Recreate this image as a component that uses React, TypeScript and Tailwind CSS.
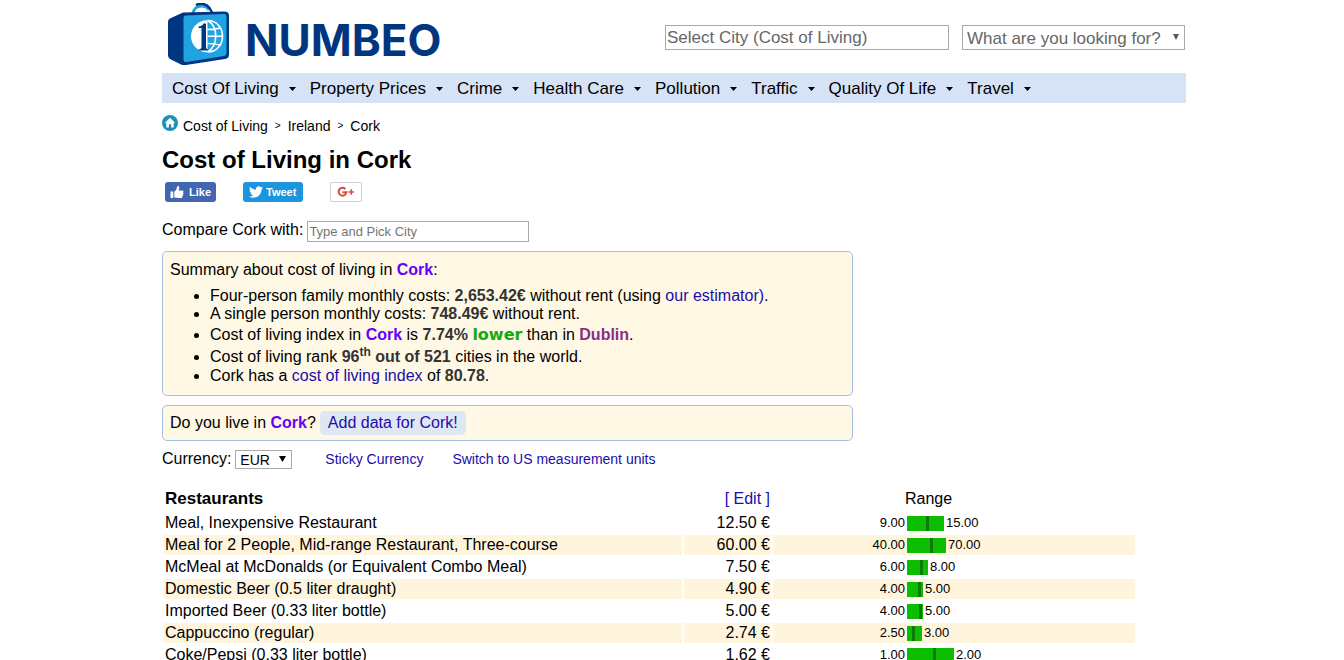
import type { ReactNode } from "react";

const menus = [
  "Cost Of Living",
  "Property Prices",
  "Crime",
  "Health Care",
  "Pollution",
  "Traffic",
  "Quality Of Life",
  "Travel",
];

type Price = {
  item: string;
  price: string;
  low: string;
  high: string;
  before: number;
  after: number;
};

const prices: Price[] = [
  { item: "Meal, Inexpensive Restaurant", price: "12.50", low: "9.00", high: "15.00", before: 19, after: 15 },
  { item: "Meal for 2 People, Mid-range Restaurant, Three-course", price: "60.00", low: "40.00", high: "70.00", before: 23, after: 13 },
  { item: "McMeal at McDonalds (or Equivalent Combo Meal)", price: "7.50", low: "6.00", high: "8.00", before: 13, after: 5 },
  { item: "Domestic Beer (0.5 liter draught)", price: "4.90", low: "4.00", high: "5.00", before: 11, after: 2 },
  { item: "Imported Beer (0.33 liter bottle)", price: "5.00", low: "4.00", high: "5.00", before: 12, after: 1 },
  { item: "Cappuccino (regular)", price: "2.74", low: "2.50", high: "3.00", before: 5, after: 7 },
  { item: "Coke/Pepsi (0.33 liter bottle)", price: "1.62", low: "1.00", high: "2.00", before: 26, after: 18 },
];

function Caret() {
  return (
    <svg className="h-1 w-[7px]" viewBox="0 0 7 4" aria-hidden="true">
      <path d="M0 0h7L3.500 4z" fill="#000" />
    </svg>
  );
}

function LogoMark() {
  return (
    <svg className="h-[62px] w-[62px] shrink-0" viewBox="0 0 62 62" aria-hidden="true">
      <path d="M25 10.500c.5-4.500 4-7.500 8.500-7.500 3.500 0 6 1.500 7.500 4" fill="none" stroke="#1fa1e0" strokeWidth="3" />
      <path d="M28 2.200C31 .2 38-.2 41.500 5l2.500 4.500" fill="none" stroke="#003580" strokeWidth="2.400" />
      <path d="M0 19Q0 16 3 15L15 9.500 56 8.500q5 0 5 4v39q0 4-4 4.500L18 62q-3 .5-5-.5l-10-5q-3-1.500-3-4z" fill="#003580" />
      <path d="M18 12.500 56 11q2.500 0 2.500 2.500V50q0 2.500-2.500 3l-37.500 6q-3 .4-3-2.500V15.500q0-2.800 2.500-3z" fill="#20a3e1" />
      <ellipse cx="39" cy="33.200" rx="16" ry="16" fill="#fff" />
      <path d="M39.500 17.200c20 0 20 32 0 32z" fill="#20a3e1" />
      <g fill="none" stroke="#fff" strokeWidth="1.600">
        <path d="M39.500 17.500c20 0 20 31.500 0 31.500M39.500 17.500c11 6 11 25 0 31.500M39.500 26.500q7 0 13-1.500M39.500 33.200h15M39.500 40.500q7 0 12.500 1.500" />
      </g>
      <path d="M30.500 23.500q4-.5 5-3h2.500V44q0 2 2 2.500v1h-9.500v-1q3-.3 3-2.500V25h-3z" fill="#003580" />
    </svg>
  );
}

function HomeIcon() {
  return (
    <svg className="h-4 w-4" viewBox="0 0 16 16" aria-hidden="true">
      <circle cx="8" cy="8" r="8" fill="#1793b8" />
      <path d="M8 2.800 2.800 8h1.500v4.600h2.600V9.200h2.200v3.400h2.600V8h1.500z" fill="#fff" />
    </svg>
  );
}

function ThumbIcon() {
  return (
    <svg className="h-3.5 w-3.5" viewBox="0 0 14 14" fill="#fff" aria-hidden="true">
      <path d="M.5 6.500h2.800V13H.5zM4.300 6.800C6 5.500 7 4 7 1.800 7 .5 9.200.6 9.200 2.800c0 1-.3 1.900-.7 2.700h3.700c1.500 0 1.700 1.800.7 2.200.9.5.7 1.800-.2 2 .6.600.3 1.600-.5 1.700.3.900-.3 1.600-1.300 1.600H7.500c-1.500 0-2.100-.5-3.200-.7z" />
    </svg>
  );
}

function BirdIcon() {
  return (
    <svg className="h-[14px] w-[14px]" viewBox="0 0 24 24" fill="#fff" aria-hidden="true">
      <path d="M23.950 4.570a10 10 0 0 1-2.820.77 4.960 4.960 0 0 0 2.160-2.720c-.95.550-2 .95-3.130 1.180a4.920 4.920 0 0 0-8.380 4.480C7.690 8.090 4.070 6.130 1.640 3.160a4.820 4.820 0 0 0-.67 2.480c0 1.710.87 3.210 2.190 4.100a4.900 4.900 0 0 1-2.230-.62v.06a4.920 4.920 0 0 0 3.950 4.830 5 5 0 0 1-2.210.08 4.940 4.940 0 0 0 4.600 3.420A9.870 9.870 0 0 1 0 19.540a14 14 0 0 0 7.550 2.210c9.050 0 14-7.500 14-13.980 0-.21 0-.42-.02-.63a9.940 9.940 0 0 0 2.460-2.550z" />
    </svg>
  );
}

function GPlusIcon() {
  return (
    <svg className="h-3 w-[18px]" viewBox="0 0 18 12" fill="none" stroke="#dc4a3d" strokeWidth="2" aria-hidden="true">
      <path d="M8.300 3A3.900 3.900 0 1 0 9.400 6.200H5.500" />
      <path d="M11.500 6H17M14.250 3.250v5.500" strokeWidth="1.600" />
    </svg>
  );
}

function A({ children }: { children: ReactNode }) {
  return (
    <a href="#" className="text-[#1a0dab]">
      {children}
    </a>
  );
}

function City({ children }: { children: ReactNode }) {
  return <strong className="text-[#6600ff]">{children}</strong>;
}

function Num({ children }: { children: ReactNode }) {
  return <strong className="text-[#333333]">{children}</strong>;
}

export default function App() {
  return (
    <div className="bg-white font-['Liberation_Sans',Arial,sans-serif] text-base leading-[18px] text-black">
      <div className="mx-auto max-w-[1028px] pl-1">
        <header className="flex h-[73px] items-start justify-between">
          <a href="#" className="flex items-start gap-[15px] pt-[3px] pl-1.5">
            <LogoMark />
            <span className="pt-[15px] font-['Inter',sans-serif] text-[44px] leading-[44px] font-bold text-[#003580]">
              NUMBEO
            </span>
          </a>
          <div className="flex gap-[13px] pt-[25px] pr-px">
            <input
              type="text"
              aria-label="Select City"
              placeholder="Select City (Cost of Living)"
              className="h-[25px] w-[284px] border border-[#a9a9a9] px-px text-[17px] placeholder:text-[#666666]"
            />
            <div className="relative">
              <select
                aria-label="What are you looking for?"
                className="h-[25px] w-[223px] appearance-none border border-[#a9a9a9] bg-white pt-0.5 pl-1 text-[17px] text-[#666666]"
              >
                <option>What are you looking for?</option>
              </select>
              <svg className="pointer-events-none absolute top-[9px] right-1.5 h-1.5 w-1.5" viewBox="0 0 6 6" aria-hidden="true">
                <path d="M0 0h6L3 6z" fill="#555" />
              </svg>
            </div>
          </div>
        </header>

        <nav className="flex h-[30px] items-center gap-[14px] bg-[#d6e3f7] pt-0.5 pl-2.5 text-[17px]">
          {menus.map((m) => (
            <button key={m} type="button" className="flex items-center gap-2.5">
              {m}
              <Caret />
            </button>
          ))}
        </nav>

        <nav aria-label="Breadcrumb" className="flex items-start gap-[5px] pt-3 text-sm leading-[18px]">
          <HomeIcon />
          <div className="flex items-center gap-[7px] pt-0.5">
            <a href="#">Cost of Living</a>
            <span className="text-[10px]">&gt;</span>
            <a href="#">Ireland</a>
            <span className="text-[10px]">&gt;</span>
            <a href="#">Cork</a>
          </div>
        </nav>

        <h1 className="pt-[11px] text-2xl leading-[28px] font-bold">Cost of Living in Cork</h1>

        <div className="flex gap-[27px] pt-2 pl-[3px] text-[11px] font-bold text-white">
          <button type="button" className="flex h-5 items-center gap-[5px] rounded-[3px] bg-[#4267b2] px-[5px]">
            <ThumbIcon />
            Like
          </button>
          <button type="button" className="flex h-5 items-center gap-[3px] rounded-[3px] bg-[#1b95e0] pr-[7px] pl-1.5">
            <BirdIcon />
            Tweet
          </button>
          <button type="button" aria-label="Share on Google Plus" className="flex h-5 w-8 items-center justify-center rounded-[2px] border border-[#d0d0d0]">
            <GPlusIcon />
          </button>
        </div>

        <div className="flex items-start gap-1 pt-[19px]">
          <label htmlFor="compare">Compare Cork with:</label>
          <input
            id="compare"
            type="text"
            placeholder="Type and Pick City"
            className="h-[21px] w-[222px] border border-[#a9a9a9] px-px text-[13px] placeholder:text-[#757575]"
          />
        </div>

        <section className="mt-[9px] h-[145px] max-w-[691px] rounded-[5px] border border-[#a3bfe6] bg-[#fff8e5] px-[7px] pt-[9px]">
          <p>
            Summary about cost of living in <City>Cork</City>:
          </p>
          <ul className="list-disc pt-2 pl-10">
            <li>
              Four-person family monthly costs: <Num>2,653.42€</Num> without rent (using <A>our estimator)</A>.
            </li>
            <li>
              A single person monthly costs: <Num>748.49€</Num> without rent.
            </li>
            <li className="leading-[24px]">
              Cost of living index in <City>Cork</City> is <Num>7.74%</Num>{" "}
              <strong className="font-['DejaVu_Sans',sans-serif] text-[#11aa11]">lower</strong> than in{" "}
              <strong className="text-[#882d88]">Dublin</strong>.
            </li>
            <li className="leading-[20px]">
              Cost of living rank{" "}
              <Num>
                96<sup>th</sup> out of 521
              </Num>{" "}
              cities in the world.
            </li>
            <li>
              Cork has a <A>cost of living index</A> of <Num>80.78</Num>.
            </li>
          </ul>
        </section>

        <section className="mt-[9px] flex h-9 max-w-[691px] items-center gap-1 rounded-[5px] border border-[#a3bfe6] bg-[#fff8e5] px-[7px]">
          <p>
            Do you live in <City>Cork</City>?
          </p>
          <a href="#" className="rounded-[5px] bg-[#dfe7f3] px-2 py-[3px] text-[#1a0dab]">
            Add data for Cork!
          </a>
        </section>

        <div className="flex items-start pt-[9px]">
          <label htmlFor="currency">Currency:</label>
          <div className="relative ml-1 flex">
            <select id="currency" className="h-[19px] w-[57px] appearance-none border border-[#a9a9a9] bg-white pl-1 text-sm leading-4">
              <option>EUR</option>
            </select>
            <svg className="pointer-events-none absolute top-1.5 right-1.5 h-1.5 w-[7px]" viewBox="0 0 7 6" aria-hidden="true">
              <path d="M0 0h7L3.500 6z" fill="#000" />
            </svg>
          </div>
          <div className="flex gap-[29px] pl-[33px] text-sm leading-[18px]">
            <A>Sticky Currency</A>
            <A>Switch to US measurement units</A>
          </div>
        </div>

        <table className="mt-4 w-full max-w-[975px] table-fixed border-separate border-spacing-[2px]">
          <colgroup>
            <col />
            <col className="w-[87px]" />
            <col className="w-[362px]" />
          </colgroup>
          <thead>
            <tr className="h-6">
              <th className="p-px text-left text-[17px] font-bold">Restaurants</th>
              <th className="p-px text-right font-normal">
                <A>[ Edit ]</A>
              </th>
              <th className="p-px pr-[52px] text-center font-normal">Range</th>
            </tr>
          </thead>
          <tbody>
            {prices.map((p) => (
              <tr key={p.item} className="even:bg-[#fff5dd]">
                <td className="p-px">{p.item}</td>
                <td className="p-px text-right">{p.price} €</td>
                <td className="p-px">
                  <div className="flex h-[18px] items-center gap-0.5 text-[13px]">
                    <span className="w-[131px] text-right">{p.low}</span>
                    <div className="flex h-[15px] bg-[#0dbe00]">
                      <div style={{ width: p.before }} />
                      <div className="w-[3px] bg-[#0a7a0a]" />
                      <div style={{ width: p.after }} />
                    </div>
                    <span>{p.high}</span>
                  </div>
                </td>
              </tr>
            ))}
          </tbody>
        </table>
      </div>
    </div>
  );
}
